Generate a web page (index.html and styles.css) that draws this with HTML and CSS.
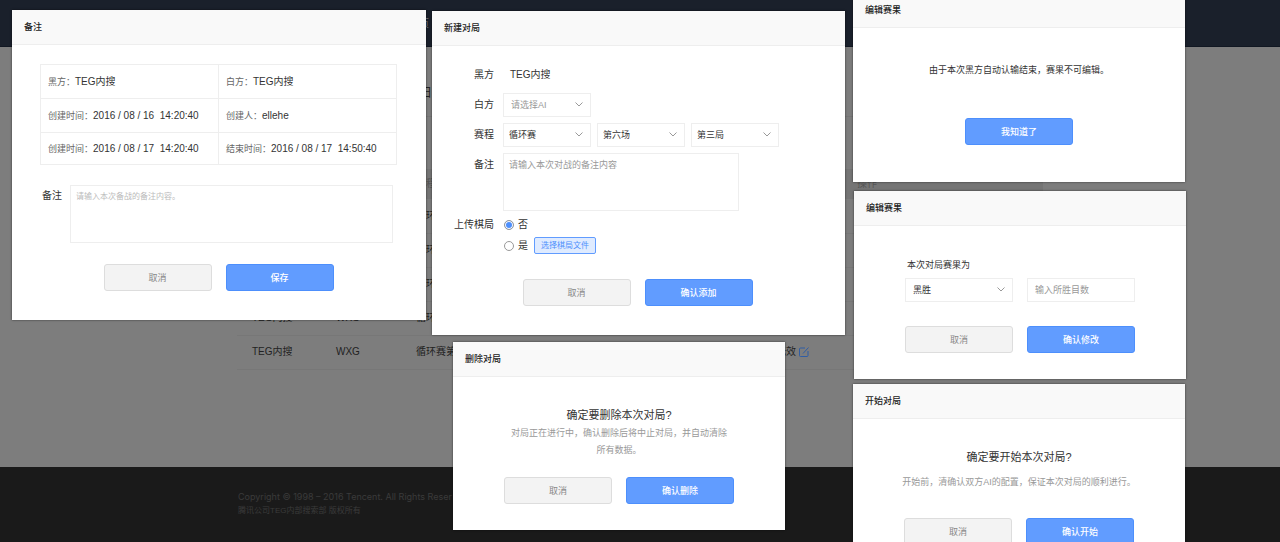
FILE: index.html
```html
<!DOCTYPE html>
<html lang="zh-CN">
<head>
<meta charset="utf-8">
<title>对局管理</title>
<link rel="stylesheet" href="styles.css">
</head>
<body>
<div class="page">
  <header class="topbar"><nav class="topnav"><a class="topnav-link" href="#">首页</a></nav></header>
  <main class="content">
    <div class="toolbar"><span class="toolbar-label">日</span></div>
    <table class="matches">
      <thead><tr><th></th><th></th><th>赛程</th><th></th><th>操作</th></tr></thead>
      <tbody>
        <tr><td></td><td></td><td>循环</td><td></td><td></td></tr>
        <tr><td></td><td></td><td>循环</td><td></td><td></td></tr>
        <tr><td></td><td></td><td>循环</td><td></td><td></td></tr>
        <tr><td>TEG内搜</td><td>WXG</td><td>循环</td><td></td><td></td></tr>
        <tr><td>TEG内搜</td><td>WXG</td><td>循环赛第</td><td><span class="result">无效 <svg class="edit" viewBox="0 0 10 10"><path d="M6 1H1.500Q.5 1 .5 2v6.500q0 1 1 1H8q1 0 1-1V4M4 6.500L9.500.5"/></svg></span></td><td></td></tr>
      </tbody>
    </table>
  </main>
  <footer class="footer">
    <p class="copy">Copyright © 1998 – 2016 Tencent. All Rights Reser</p>
    <p class="copy-cn">腾讯公司TEG内部搜索部 版权所有</p>
  </footer>
</div>

<section class="dialog dialog-note">
  <h2 class="dialog-title">备注</h2>
  <div class="note-body">
    <table class="info">
      <tr><td>黑方：<b>TEG内搜</b></td><td>白方：<b>TEG内搜</b></td></tr>
      <tr><td>创建时间：<b>2016 / 08 / 16&nbsp; 14:20:40</b></td><td>创建人：<b>ellehe</b></td></tr>
      <tr><td>创建时间：<b>2016 / 08 / 17&nbsp; 14:20:40</b></td><td>结束时间：<b>2016 / 08 / 17&nbsp; 14:50:40</b></td></tr>
    </table>
    <div class="note-field">
      <label for="note">备注</label>
      <textarea id="note" class="box area small" placeholder="请输入本次备战的备注内容。"></textarea>
    </div>
    <div class="actions"><button class="btn">取消</button><button class="btn primary">保存</button></div>
  </div>
</section>

<section class="dialog dialog-create">
  <h2 class="dialog-title">新建对局</h2>
  <div class="create-body">
    <div class="form">
      <span class="label">黑方</span><span class="value">TEG内搜</span>
      <label class="label" for="white">白方</label>
      <div class="selects"><span class="select"><select id="white" class="box muted"><option>请选择AI</option></select><svg class="arrow" viewBox="0 0 8 5"><path d="M.5.5L4 4 7.500.5"/></svg></span></div>
      <label class="label" for="stage">赛程</label>
      <div class="selects stage">
        <span class="select"><select id="stage" class="box"><option>循环赛</option></select><svg class="arrow" viewBox="0 0 8 5"><path d="M.5.5L4 4 7.500.5"/></svg></span>
        <span class="select"><select aria-label="场次" class="box"><option>第六场</option></select><svg class="arrow" viewBox="0 0 8 5"><path d="M.5.5L4 4 7.500.5"/></svg></span>
        <span class="select"><select aria-label="局次" class="box"><option>第三局</option></select><svg class="arrow" viewBox="0 0 8 5"><path d="M.5.5L4 4 7.500.5"/></svg></span>
      </div>
      <label class="label" for="remark">备注</label>
      <textarea id="remark" class="box area wide" placeholder="请输入本次对战的备注内容"></textarea>
      <span class="label upload-label">上传棋局</span>
      <div class="radios">
        <label class="radio"><input type="radio" name="upload" checked>否</label>
        <div class="radio-row"><label class="radio"><input type="radio" name="upload">是</label><button class="file">选择棋局文件</button></div>
      </div>
    </div>
    <div class="actions"><button class="btn">取消</button><button class="btn primary">确认添加</button></div>
  </div>
</section>

<section class="dialog dialog-delete">
  <h2 class="dialog-title">删除对局</h2>
  <div class="confirm-body">
    <p class="question">确定要删除本次对局?</p>
    <p class="hint">对局正在进行中，确认删除后将中止对局，并自动清除<br>所有数据。</p>
    <div class="actions"><button class="btn">取消</button><button class="btn primary">确认删除</button></div>
  </div>
</section>

<section class="dialog dialog-locked">
  <h2 class="dialog-title">编辑赛果</h2>
  <div class="locked-body">
    <p class="message">由于本次黑方自动认输结束，赛果不可编辑。</p>
    <div class="actions"><button class="btn primary">我知道了</button></div>
  </div>
</section>

<section class="dialog dialog-result">
  <h2 class="dialog-title">编辑赛果</h2>
  <div class="result-body">
    <label class="result-label" for="winner">本次对局赛果为</label>
    <div class="result-fields">
      <span class="select"><select id="winner" class="box"><option>黑胜</option></select><svg class="arrow" viewBox="0 0 8 5"><path d="M.5.5L4 4 7.500.5"/></svg></span>
      <input class="box" type="text" aria-label="所胜目数" placeholder="输入所胜目数">
    </div>
    <div class="actions"><button class="btn">取消</button><button class="btn primary">确认修改</button></div>
  </div>
</section>

<section class="dialog dialog-start">
  <h2 class="dialog-title">开始对局</h2>
  <div class="confirm-body">
    <p class="question">确定要开始本次对局?</p>
    <p class="hint single">开始前，清确认双方AI的配置，保证本次对局的顺利进行。</p>
    <div class="actions"><button class="btn">取消</button><button class="btn primary">确认开始</button></div>
  </div>
</section>
</body>
</html>
```

FILE: styles.css
```css
* { box-sizing: border-box; }
body, h2, p { margin: 0; }
body {
  position: relative;
  height: 100vh;
  overflow: hidden;
  font: 10px/16px "Liberation Sans", "Noto Sans CJK SC", sans-serif;
  color: #333;
}
button, input, select, textarea { font: inherit; color: inherit; margin: 0; }

/* Dimmed page behind the dialogs */
.page { display: flex; flex-direction: column; min-height: 100vh; background: #7d7d7d; color: #222; }
.topbar { height: 47px; background: #1a202b; border-bottom: 1px solid #111722; }
.topnav { padding: 16px 0 0 409px; }
.topnav-link { font-size: 10px; color: #777c83; text-decoration: none; }
.content { flex: 1; width: 806px; margin: 0 auto; }
.toolbar { height: 70px; margin-bottom: 52px; padding: 38px 0 0 183px; border-bottom: 1px solid #757575; }
.toolbar-label { font-size: 12px; }
.matches { width: 100%; border-collapse: collapse; table-layout: fixed; }
.matches th { height: 30px; padding: 0; background: #757575; color: #555; font-weight: 400; text-align: left; }
.matches td { height: 34px; padding: 0; border-bottom: 1px solid #777; white-space: nowrap; }
.matches th:nth-child(1) { width: 99px; }
.matches th:nth-child(2) { width: 80px; }
.matches th:nth-child(3) { width: 360px; }
.matches th:nth-child(4) { width: 81px; }
.matches th:first-child, .matches td:first-child { padding-left: 15px; }
.result { display: flex; align-items: center; gap: 3px; }
.edit { width: 10px; height: 10px; fill: none; stroke: #2f5da5; }
.footer { height: 75px; padding: 22px 0 0 238px; background: #1a1a1a; color: #3b3b3b; }
.copy { font-family: Inter, sans-serif; font-size: 9px; }
.copy-cn { font-size: 8px; line-height: 12px; }

/* Dialog windows */
.dialog { position: absolute; width: 332px; background: #fff; box-shadow: 0 0 2px rgba(0, 0, 0, .6); }
.dialog-note { left: 12px; top: 10px; width: 414px; height: 310px; }
.dialog-create { left: 432px; top: 11px; width: 413px; height: 324px; }
.dialog-delete { left: 453px; top: 342px; height: 188px; }
.dialog-locked { left: 853px; top: -7px; height: 189px; }
.dialog-result { left: 854px; top: 191px; height: 188px; }
.dialog-start { left: 853px; top: 384px; height: 188px; }
.dialog-title {
  height: 35px;
  padding: 0 12px;
  background: #f9f9f9;
  border-bottom: 1px solid #eee;
  font-size: 9px;
  line-height: 34px;
  font-weight: 500;
  color: #222;
}

.actions { display: flex; justify-content: center; gap: 14px; }
.btn {
  width: 108px;
  height: 27px;
  padding: 0;
  border: 1px solid #ddd;
  border-radius: 3px;
  background: #f3f3f3;
  color: #888;
  font-size: 9px;
}
.btn.primary { border-color: #4d8ffc; background: #619cff; color: #fff; font-weight: 500; }

.box {
  width: 100%;
  height: 24px;
  padding: 0 7px;
  border: 1px solid #eee;
  border-radius: 0;
  background: #fff;
  font-size: 9px;
  outline: 0;
  appearance: none;
}
.box::placeholder { color: #999; }
.select { position: relative; display: block; }
.muted { color: #999; }
.arrow { position: absolute; right: 8px; top: 9px; width: 8px; height: 5px; fill: none; stroke: #999; pointer-events: none; }
.area { display: block; height: 58px; padding: 3px 5px; resize: none; }
.area.small { font-size: 8px; }
.area.small::placeholder { color: #bbb; }

.note-body { padding: 19px 29px 0 28px; }
.info { width: 100%; border-collapse: collapse; table-layout: fixed; font-size: 9px; color: #666; }
.info td { height: 34px; padding: 0 7px; border: 1px solid #eee; white-space: nowrap; }
.info tr:last-child td { height: 32px; }
.info b { font-size: 10px; font-weight: 400; color: #333; }
.note-field { display: flex; gap: 8px; padding: 20px 4px 21px 2px; }
.note-field label { flex: none; line-height: 22px; }
.note-field .area { flex: 1; }

.form { display: grid; grid-template-columns: 50px 1fr; column-gap: 9px; row-gap: 6px; padding-left: 12px; }
.create-body { padding: 17px 67px 0 0; }
.create-body .actions { padding: 25px 0 0 65px; }
.label { text-align: right; line-height: 24px; }
.upload-label { line-height: 16px; }
.value { padding-left: 7px; line-height: 24px; }
.selects { display: grid; grid-template-columns: repeat(3, 88px); gap: 6px; }
.stage .box { padding: 0 5px; }
.wide { width: 236px; }
.radios { display: flex; flex-direction: column; gap: 4px; }
.radio-row { display: flex; align-items: center; gap: 6px; }
.radio { display: flex; align-items: center; gap: 4px; }
.radio input { appearance: none; width: 10px; height: 10px; margin-left: 1px; border: 1px solid #999; border-radius: 50%; background: #fff; }
.radio input:checked { background: #4d8ffc; box-shadow: inset 0 0 0 1px #fff; }
.file { height: 17px; padding: 0 6px; border: 1px solid #619cff; border-radius: 2px; background: #dfebff; color: #4d8ffc; font-size: 8px; line-height: 14px; }

.confirm-body { padding: 29px 20px 0; text-align: center; }
.question { font-size: 11px; line-height: 18px; }
.hint { padding-top: 1px; margin-bottom: 18px; line-height: 17px; font-size: 9px; color: #999; }
.hint.single { padding-top: 8px; margin-bottom: 27px; }
.locked-body { padding: 34px 20px 0; text-align: center; }
.message { font-size: 9px; margin-bottom: 40px; }
.result-body { padding: 31px 51px 0; }
.result-label { display: block; padding-left: 2px; font-size: 9px; }
.result-fields { display: grid; grid-template-columns: 1fr 1fr; gap: 14px; margin: 5px 0 24px; }
```
